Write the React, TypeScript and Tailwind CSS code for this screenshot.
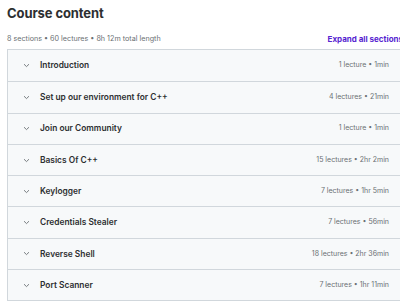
const sections = [
  { title: 'Introduction', meta: '1 lecture • 1min' },
  { title: 'Set up our environment for C++', meta: '4 lectures • 21min' },
  { title: 'Join our Community', meta: '1 lecture • 1min' },
  { title: 'Basics Of C++', meta: '15 lectures • 2hr 2min' },
  { title: 'Keylogger', meta: '7 lectures • 1hr 5min' },
  { title: 'Credentials Stealer', meta: '7 lectures • 56min' },
  { title: 'Reverse Shell', meta: '18 lectures • 2hr 36min' },
  { title: 'Port Scanner', meta: '7 lectures • 1hr 11min' },
]

function Chevron() {
  return (
    <svg width="7" height="5" viewBox="0 0 7 5" className="shrink-0">
      <path d="M1 1.2 L3.5 3.6 L6 1.2" fill="none" stroke="#6a6f73" strokeWidth="0.9" />
    </svg>
  )
}

export default function App() {
  return (
    <div className="w-[400px] h-[301px] overflow-hidden bg-white text-[#2d2f31] font-['Inter',sans-serif]">
      <div className="w-[420px] pl-[7px]">
        <h2 className="pt-[4px] text-[13px] leading-[18px] font-bold tracking-[-0.1px]">Course content</h2>
        <div className="mt-[11px] flex items-center justify-between pr-[17px]">
          <span className="text-[7.2px] text-[#6a6f73]">8 sections • 60 lectures • 8h 12m total length</span>
          <span className="text-[8px] font-bold text-[#5624d0]">Expand all sections</span>
        </div>
        <div className="mt-[4px] border border-[#d1d7dc]">
          {sections.map((s, i) => (
            <div
              key={s.title}
              className={`h-[31.3px] flex items-center bg-[#f7f9fa] pl-[15px] pr-[30px] ${i > 0 ? 'border-t border-[#d1d7dc]' : ''}`}
            >
              <Chevron />
              <span className="ml-[10px] text-[8.4px] font-semibold text-[#2d2f31]">{s.title}</span>
              <span className="ml-auto text-[7px] text-[#6a6f73]">{s.meta}</span>
            </div>
          ))}
        </div>
      </div>
    </div>
  )
}
